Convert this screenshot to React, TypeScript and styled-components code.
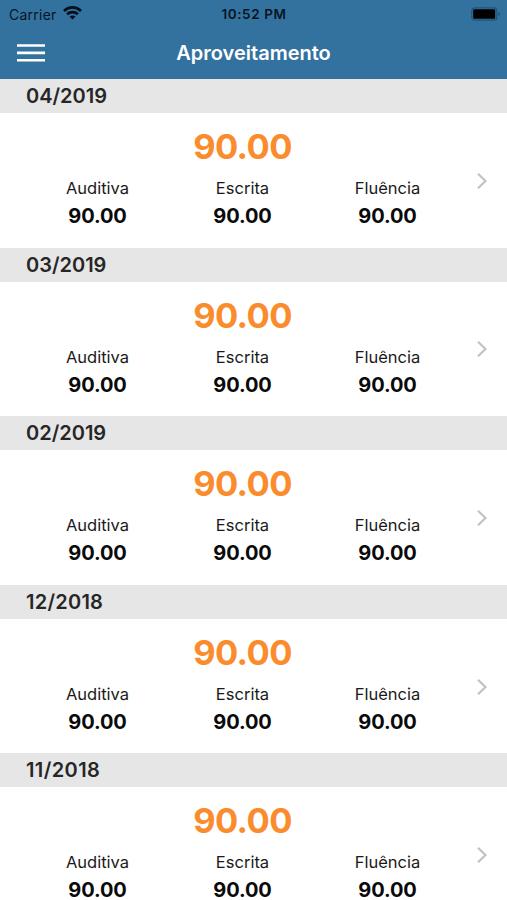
import React from "react";
import styled, { createGlobalStyle } from "styled-components";

const GlobalStyle = createGlobalStyle`
  * { box-sizing: border-box; }
  body { margin: 0; background: #fff; overflow: hidden; }
`;

const Screen = styled.main`
  width: 507px;
  height: 900px;
  overflow: hidden;
  background: #fff;
  font-family: Inter, "Liberation Sans", sans-serif;
  color: #0a0a0a;
`;

const Header = styled.header`
  height: 79px;
  background: #33729f;
`;

const StatusBar = styled.div`
  height: 27px;
  display: grid;
  grid-template-columns: 1fr auto 1fr;
  align-items: center;
  padding: 0 5px 0 9px;
  color: #08151f;
`;

const Carrier = styled.div`
  display: flex;
  align-items: center;
  gap: 6px;
  font-size: 14px;
  line-height: 27px;
  letter-spacing: 0.25px;

  svg {
    margin-bottom: 2px;
  }
`;

const Clock = styled.time`
  font-size: 13.5px;
  font-weight: 600;
  letter-spacing: 0.6px;
  line-height: 27px;
  padding-top: 1px;
  margin-right: 3px;
`;

const BatterySlot = styled.div`
  display: flex;
  justify-content: flex-end;
  padding-bottom: 1px;
`;

const NavBar = styled.div`
  height: 52px;
  display: grid;
  grid-template-columns: 60px 1fr 60px;
  align-items: center;
`;

const MenuButton = styled.button`
  border: 0;
  padding: 0 0 0 16px;
  background: none;
  display: flex;
`;

const Title = styled.h1`
  margin: 0;
  text-align: center;
  font-size: 20px;
  font-weight: 600;
  line-height: 52px;
  height: 52px;
  color: #fff;
`;

const Section = styled.section`
  height: 168.6px;
`;

const Month = styled.h2<{ $tracking: number }>`
  margin: 0;
  height: 34px;
  padding-left: 26px;
  background: #e6e6e6;
  color: #262626;
  font-size: 20px;
  font-weight: 600;
  line-height: 35.4px;
  letter-spacing: ${({ $tracking }) => $tracking}px;
`;

const Result = styled.div`
  height: 134.6px;
  display: grid;
  grid-template-columns: 435px 1fr;
  padding-left: 25px;
`;

const Scores = styled.div`
  padding-top: 13px;
`;

const Overall = styled.div`
  text-align: center;
  font-size: 34.5px;
  font-weight: 700;
  line-height: 42px;
  letter-spacing: -0.6px;
  color: #fa8c2e;
`;

const Skills = styled.div`
  display: grid;
  grid-template-columns: repeat(3, 1fr);
  text-align: center;
  padding-top: 7px;
`;

const SkillName = styled.div`
  font-size: 16.5px;
  line-height: 26px;
  color: #1a1a1a;
`;

const SkillScore = styled.div`
  padding-top: 6px;
  font-size: 20px;
  font-weight: 700;
  line-height: 18px;
  letter-spacing: -0.1px;
`;

const Disclosure = styled.div`
  display: flex;
  align-items: center;
  padding: 1px 0 0 16px;
`;

const WifiIcon = () => (
  <svg width="19" height="14" viewBox="0 0 19 14" fill="none" stroke="#06101a" strokeWidth="2.8">
    <path d="M1 4.9C5.8 0.3 13.2 0.3 18 4.9" />
    <path d="M4.1 8.3C7.2 5.5 11.8 5.5 14.9 8.3" />
    <path d="M6.5 10.5C8.3 9 10.7 9 12.5 10.5L9.5 13.5Z" fill="#06101a" stroke="none" />
  </svg>
);

const BatteryIcon = () => (
  <svg width="31" height="14" viewBox="0 0 31 14">
    <rect x="0.8" y="0.8" width="25" height="12.4" rx="3" fill="none" stroke="#235374" strokeWidth="1.2" />
    <rect x="2.2" y="2.3" width="22" height="9.4" rx="1.2" fill="#000" />
    <path d="M27.5 5C29.6 5.6 29.6 8.4 27.5 9Z" fill="#235374" />
  </svg>
);

const MenuIcon = () => (
  <svg width="30" height="20" viewBox="0 0 30 20" stroke="#fff" strokeWidth="2.6">
    <path d="M1 2.5H29M1 9.9H29M1 17.3H29" />
  </svg>
);

const ChevronIcon = () => (
  <svg width="12" height="18" viewBox="0 0 12 18" fill="none" stroke="#c2c2c4" strokeWidth="2.2">
    <path d="M2 1.8L9.5 9L2 16.2" />
  </svg>
);

const months = [
  { label: "04/2019", tracking: 0 },
  { label: "03/2019", tracking: 0 },
  { label: "02/2019", tracking: 0 },
  { label: "12/2018", tracking: 0.25 },
  { label: "11/2018", tracking: 0.4 },
];
const skills = ["Auditiva", "Escrita", "Fluência"];

export default function App() {
  return (
    <Screen>
      <GlobalStyle />
      <Header>
        <StatusBar>
          <Carrier>Carrier<WifiIcon /></Carrier>
          <Clock>10:52 PM</Clock>
          <BatterySlot><BatteryIcon /></BatterySlot>
        </StatusBar>
        <NavBar>
          <MenuButton aria-label="Menu"><MenuIcon /></MenuButton>
          <Title>Aproveitamento</Title>
        </NavBar>
      </Header>
      {months.map(({ label, tracking }) => (
        <Section key={label}>
          <Month $tracking={tracking}>{label}</Month>
          <Result>
            <Scores>
              <Overall>90.00</Overall>
              <Skills>
                {skills.map((skill) => (
                  <div key={skill}>
                    <SkillName>{skill}</SkillName>
                    <SkillScore>90.00</SkillScore>
                  </div>
                ))}
              </Skills>
            </Scores>
            <Disclosure><ChevronIcon /></Disclosure>
          </Result>
        </Section>
      ))}
    </Screen>
  );
}
